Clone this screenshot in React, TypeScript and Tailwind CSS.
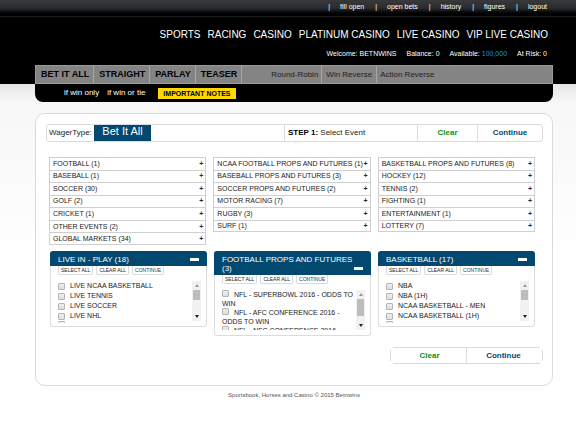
import React from "react";

const topLinks = ["fill open", "open bets", "history", "figures", "logout"];
const sections = ["SPORTS", "RACING", "CASINO", "PLATINUM CASINO", "LIVE CASINO", "VIP LIVE CASINO"];
const wagers = ["BET IT ALL", "STRAIGHT", "PARLAY", "TEASER"];

const categories = [
  ["FOOTBALL (1)", "BASEBALL (1)", "SOCCER (30)", "GOLF (2)", "CRICKET (1)", "OTHER EVENTS (2)", "GLOBAL MARKETS (34)"],
  [
    "NCAA FOOTBALL PROPS AND FUTURES (1)",
    "BASEBALL PROPS AND FUTURES (3)",
    "SOCCER PROPS AND FUTURES (2)",
    "MOTOR RACING (7)",
    "RUGBY (3)",
    "SURF (1)",
  ],
  ["BASKETBALL PROPS AND FUTURES (8)", "HOCKEY (12)", "TENNIS (2)", "FIGHTING (1)", "ENTERTAINMENT (1)", "LOTTERY (7)"],
];

const checkbox =
  "mr-[5px] h-[7px] w-[7px] appearance-none rounded-[1px] border border-[#b5b5b5] bg-linear-to-b from-[#eeeeee] to-[#dddddd]";

function CategoryList({ items }: { items: string[] }) {
  return (
    <ul className="grid h-[88px] grid-rows-7">
      {items.map((name) => (
        <li key={name} className="flex border border-b-0 border-[#cfcfcf] last:border-b">
          <button className="flex min-w-0 flex-1 items-center justify-between pr-[2px] pl-[3px] text-left text-[7px] leading-[10px] whitespace-nowrap">
            <span>{name}</span>
            <span className="font-bold text-[#302040]">+</span>
          </button>
        </li>
      ))}
    </ul>
  );
}

function Scrollbar({ long }: { long?: boolean }) {
  return (
    <div className="flex w-[9px] shrink-0 flex-col items-center justify-between bg-[#f1f1f1] py-[3px]" aria-hidden="true">
      <div className="flex flex-col items-center gap-[3px]">
        <svg width="4" height="3" viewBox="0 0 4 3">
          <path d="M2 0L4 3H0Z" fill="#999" />
        </svg>
        <div className={long ? "h-[17px] w-[7px] bg-[#bdbdbd]" : "h-[10px] w-[7px] bg-[#bdbdbd]"} />
      </div>
      <svg width="4" height="3" viewBox="0 0 4 3">
        <path d="M0 0H4L2 3Z" fill="#222" />
      </svg>
    </div>
  );
}

function Panel({ title, items, wrap }: { title: string; items: string[]; wrap?: boolean }) {
  return (
    <section className="overflow-hidden rounded-[3px] bg-white shadow-[inset_0_0_0_1px_#dcdcdc]">
      <header className="flex items-end justify-between bg-[#02486f] px-2 pt-1 pb-[2px] text-white">
        <h2 className="min-w-0 flex-1 text-[8px] leading-[9px]">{title}</h2>
        <button aria-label={"Collapse " + title} className="flex h-[9px] w-[9px] shrink-0 items-center">
          <span className="h-[3px] w-full bg-white" />
        </button>
      </header>
      <div className="flex gap-[3px] px-2">
        {["SELECT ALL", "CLEAR ALL", "CONTINUE"].map((label) => (
          <button
            key={label}
            className="h-[9px] rounded-b-[2px] border border-t-0 border-[#dadada] px-[2px] text-[5px] leading-[7px] whitespace-nowrap text-[#222] last:text-[#02486f]"
          >
            {label}
          </button>
        ))}
      </div>
      <div className="mt-[6px] mb-[6px] flex h-10 pr-[6px] pl-2">
        {wrap ? (
          <ul className="min-w-0 flex-1 overflow-hidden text-[7px] leading-[9px]">
            {items.map((item) => (
              <li key={item}>
                <label>
                  <input type="checkbox" className={checkbox} />
                  {item}
                </label>
              </li>
            ))}
          </ul>
        ) : (
          <ul className="grid h-[42px] min-w-0 flex-1 auto-rows-[10px] overflow-hidden text-[7px] leading-[10px]">
            {items.map((item) => (
              <li key={item}>
                <label className="flex items-center">
                  <input type="checkbox" className={checkbox} />
                  {item}
                </label>
              </li>
            ))}
            <li className="flex items-start">
              <input type="checkbox" aria-label="Next event" className={checkbox} />
            </li>
          </ul>
        )}
        <Scrollbar long={wrap} />
      </div>
    </section>
  );
}

export default function App() {
  return (
    <div className="min-h-screen bg-white pb-4 font-['Liberation_Sans',Arial,sans-serif] text-[#222]">
      <div className="bg-black text-white">
        <div className="h-4 bg-linear-to-b from-[#38393b] via-[#2b2c2e] to-black pr-[29px]">
          <nav className="flex h-[14px] items-center justify-end text-[7px]">
            {topLinks.map((link) => (
              <React.Fragment key={link}>
                <span className="pr-[10px] pl-[11px]">|</span>
                <a href="#">{link}</a>
              </React.Fragment>
            ))}
          </nav>
        </div>
        <div className="h-px bg-[#1c1c1c]" />
        <nav className="flex justify-end gap-[7px] pt-3 pr-[28px] text-[10px] leading-[12px] whitespace-nowrap">
          {sections.map((s) => (
            <a key={s} href="#">
              {s}
            </a>
          ))}
        </nav>
        <div className="flex justify-end gap-[10px] pt-[8px] pr-[29px] pb-[7px] text-[7px] leading-[9px]">
          <span>Welcome: BETNWINS</span>
          <span>Balance: 0</span>
          <span>
            Available: <span className="text-[#1490e6]">100,000</span>
          </span>
          <span>At Risk: 0</span>
        </div>
        <nav className="mr-[23px] ml-[35px] flex h-[19px] items-stretch border border-[#9a9a9a] bg-[#848484] text-black">
          {wagers.map((w) => (
            <a key={w} href="#" className="flex items-center border-r border-[#a8a8a8] pr-1 pl-[5px] text-[9px] font-bold whitespace-nowrap">
              {w}
            </a>
          ))}
          <div className="flex pl-[26px] text-[8px] text-[#222]">
            <a href="#" className="flex items-center border-r border-[#a8a8a8] px-[3px]">Round-Robin</a>
            <a href="#" className="flex items-center border-r border-[#a8a8a8] px-[4px]">Win Reverse</a>
            <a href="#" className="flex items-center px-[3px]">Action Reverse</a>
          </div>
        </nav>
      </div>

      <div className="bg-linear-to-b from-[#e6e6e6] via-[#f7f7f7] via-6% to-white to-60% pr-[23px] pl-[35px]">
        <div className="flex h-[18px] items-center gap-2 rounded-b-[8px] bg-black pl-[29px] text-[8px] text-white">
          <a href="#">if win only</a>
          <a href="#">if win or tie</a>
          <a href="#" className="ml-[5px] bg-[#ffd800] px-[5px] text-[7px] leading-[11px] font-bold text-black">
            IMPORTANT NOTES
          </a>
        </div>

        <main className="mt-[11px] rounded-[10px] border border-[#dadada] bg-white pt-[10px] pr-[9px] pb-[21px] pl-[10px]">
          <div className="flex h-[18px] items-stretch rounded-[3px] border border-[#dcdcdc] text-[8px] whitespace-nowrap">
            <span className="w-[47px] pl-[2px] leading-4">WagerType:</span>
            <strong className="w-[57px] bg-[#02486f] text-center text-[11px] leading-[13px] font-normal text-white">Bet It All</strong>
            <span className="flex-1" />
            <span className="w-[133px] border-l border-[#dcdcdc] pl-[3px] leading-4">
              <b className="text-black">STEP 1:</b> Select Event
            </span>
            <button className="w-[60px] border-l border-[#dcdcdc] font-bold text-[#0a930a]">Clear</button>
            <button className="w-[65px] border-l border-[#dcdcdc] font-bold text-[#02486f]">Continue</button>
          </div>

          <div className="mt-[15px] mr-[8px] ml-[3px] grid grid-cols-3 gap-[7px]">
            {categories.map((items) => (
              <CategoryList key={items[0]} items={items} />
            ))}
          </div>

          <div className="mt-[6px] mr-2 ml-1 grid grid-cols-3 items-start gap-[7px]">
            <Panel title="LIVE IN - PLAY (18)" items={["LIVE NCAA BASKETBALL", "LIVE TENNIS", "LIVE SOCCER", "LIVE NHL"]} />
            <Panel
              wrap
              title="FOOTBALL PROPS AND FUTURES (3)"
              items={["NFL - SUPERBOWL 2016 - ODDS TO WIN", "NFL - AFC CONFERENCE 2016 - ODDS TO WIN", "NFL - NFC CONFERENCE 2016 - ODDS TO WIN"]}
            />
            <Panel title="BASKETBALL (17)" items={["NBA", "NBA (1H)", "NCAA BASKETBALL - MEN", "NCAA BASKETBALL (1H)"]} />
          </div>

          <div className="mt-[11px] ml-auto flex w-[153px] items-center gap-[2px] text-[8px] font-bold">
            <span className="h-[11px] w-px bg-[#dcdcdc]" />
            <div className="flex h-[17px] flex-1 border-y border-[#dcdcdc]">
              <button className="flex-1 text-[#0a930a]">Clear</button>
              <button className="flex-1 border-l border-[#dcdcdc] text-[#02486f]">Continue</button>
            </div>
            <span className="h-[11px] w-px bg-[#dcdcdc]" />
          </div>
        </main>
      </div>
      <footer className="mt-[5px] pl-3 text-center text-[6px] leading-[8px] text-[#555]">
        Sportsbook, Horses and Casino © 2015 Betnwins
      </footer>
    </div>
  );
}
